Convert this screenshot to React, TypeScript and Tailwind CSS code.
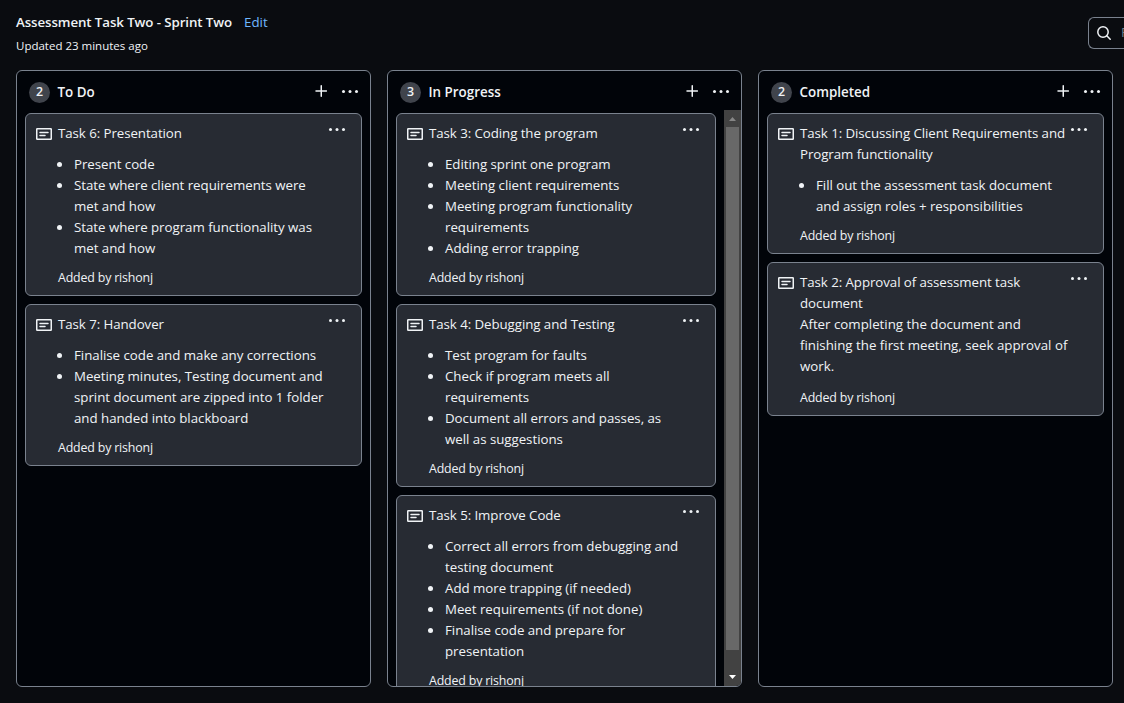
import React from "react";

type Task = { title: string[]; items?: string[]; text?: string[] };
type ColumnData = { name: string; tasks: Task[]; scroll?: boolean };

const columns: ColumnData[] = [
  {
    name: "To Do",
    tasks: [
      {
        title: ["Task 6: Presentation"],
        items: ["Present code", "State where client requirements were\nmet and how", "State where program functionality was\nmet and how"],
      },
      {
        title: ["Task 7: Handover"],
        items: ["Finalise code and make any corrections", "Meeting minutes, Testing document and\nsprint document are zipped into 1 folder\nand handed into blackboard"],
      },
    ],
  },
  {
    name: "In Progress",
    scroll: true,
    tasks: [
      {
        title: ["Task 3: Coding the program"],
        items: ["Editing sprint one program", "Meeting client requirements", "Meeting program functionality\nrequirements", "Adding error trapping"],
      },
      {
        title: ["Task 4: Debugging and Testing"],
        items: ["Test program for faults", "Check if program meets all\nrequirements", "Document all errors and passes, as\nwell as suggestions"],
      },
      {
        title: ["Task 5: Improve Code"],
        items: ["Correct all errors from debugging and\ntesting document", "Add more trapping (if needed)", "Meet requirements (if not done)", "Finalise code and prepare for\npresentation"],
      },
    ],
  },
  {
    name: "Completed",
    tasks: [
      {
        title: ["Task 1: Discussing Client Requirements and", "Program functionality"],
        items: ["Fill out the assessment task document\nand assign roles + responsibilities"],
      },
      {
        title: ["Task 2: Approval of assessment task", "document"],
        text: ["After completing the document and", "finishing the first meeting, seek approval of", "work."],
      },
    ],
  },
];

function Dots() {
  return (
    <svg width="18" height="6" viewBox="0 0 18 6" fill="currentColor" className="shrink-0">
      <circle cx="2.5" cy="2.5" r="1.5" />
      <circle cx="9" cy="2.5" r="1.5" />
      <circle cx="15.5" cy="2.5" r="1.5" />
    </svg>
  );
}

function Plus() {
  return (
    <svg width="12" height="12" viewBox="0 0 12 12" fill="none" stroke="currentColor" strokeWidth="1.5" strokeLinecap="round">
      <path d="M6.25 .75v10.5M1 6h10.5" />
    </svg>
  );
}

function Note() {
  return (
    <svg width="16" height="16" viewBox="0 0 16 16" fill="none" stroke="currentColor" strokeWidth="1.5" className="mt-[3px] shrink-0">
      <rect x=".75" y="2.75" width="14.5" height="10.5" rx=".5" />
      <path d="M4 6.5h8M4 9.5h5" strokeLinecap="round" />
    </svg>
  );
}

function Card({ task }: { task: Task }) {
  return (
    <article className="relative flex shrink-0 gap-1.5 rounded-md border border-[#7a828e] bg-[#272b33] pt-[9px] pr-3 pb-[7px] pl-[10px]">
      <Note />
      <div className="text-[13.3px] leading-[21px] whitespace-pre">
        <h3 className="tracking-[-0.07px]">{task.title.join("\n")}</h3>
        {task.items && (
          <ul className="mt-2.5 pl-4">
            {task.items.map((item) => (
              <li
                key={item}
                className="relative tracking-[-0.03px] before:absolute before:top-[8px] before:-left-[17px] before:size-[5px] before:rounded-full before:bg-[#f0f3f6]"
              >
                {item}
              </li>
            ))}
          </ul>
        )}
        {task.text && <p className="pb-0.5">{task.text.join("\n")}</p>}
        <p className="mt-2 text-[12.4px] tracking-[-0.17px]">Added by rishonj</p>
      </div>
      <button aria-label="Card menu" className="absolute top-[13px] right-[15px]">
        <Dots />
      </button>
    </article>
  );
}

function Scrollbar() {
  return (
    <div className="flex w-[17px] shrink-0 flex-col items-center bg-[#424242]">
      <svg width="17" height="17" viewBox="0 0 17 17" fill="#868686">
        <path d="M5 11h7L8.5 7z" />
      </svg>
      <div className="w-[13px] flex-1 bg-[#686868]" />
      <div className="flex h-[36px] items-end">
        <svg width="17" height="17" viewBox="0 0 17 17" fill="#fff">
          <path d="M5 6h7L8.5 10z" />
        </svg>
      </div>
    </div>
  );
}

function Column({ column }: { column: ColumnData }) {
  return (
    <section className="flex h-[617px] w-[355px] shrink-0 flex-col overflow-hidden rounded-md border border-[#7a828e] bg-[#010409]">
      <header className="flex h-[39px] shrink-0 items-center pt-1 pr-[11px] pl-3">
        <span className="flex size-[21px] items-center justify-center rounded-full bg-[#40444c] text-[12.4px] font-semibold">
          {column.tasks.length}
        </span>
        <h2 className="ml-[7.5px] flex-1 text-[13.4px] font-semibold">{column.name}</h2>
        <button aria-label="Add card" className="mb-[3px]">
          <Plus />
        </button>
        <button aria-label="Column menu" className="mb-0.5 ml-3.5">
          <Dots />
        </button>
      </header>
      <div className="flex min-h-0 flex-1">
        <div className="flex min-w-0 flex-1 flex-col gap-2 overflow-hidden px-2 pt-[3px]">
          {column.tasks.map((task) => (
            <Card key={task.title[0]} task={task} />
          ))}
        </div>
        {column.scroll && <Scrollbar />}
      </div>
    </section>
  );
}

export default function App() {
  return (
    <main className="h-[703px] w-[1124px] overflow-hidden bg-[#0a0c10] font-['Open_Sans',sans-serif] text-[#f0f3f6]">
      <header className="flex h-[70px] justify-between pl-4">
        <div className="pt-3">
          <div className="flex gap-3 text-[13.3px] leading-[21px]">
            <h1 className="font-semibold tracking-[-0.09px]">Assessment Task Two - Sprint Two</h1>
            <a className="text-[#71b7ff]">Edit</a>
          </div>
          <p className="mt-[3px] text-[11.5px] leading-[20px]">Updated 23 minutes ago</p>
        </div>
        <div className="mt-[17px] flex h-8 w-9 shrink-0 items-center gap-2.5 overflow-hidden rounded-l-md border border-r-0 border-[#7a828e] pl-2 text-[13.3px]">
          <svg width="14" height="14" viewBox="0 0 14 14" fill="none" stroke="currentColor" strokeWidth="1.5" strokeLinecap="round" className="shrink-0">
            <circle cx="6" cy="6" r="5.2" />
            <path d="m9.8 9.8 3.4 3.4" />
          </svg>
          <span className="text-[#7a828e]">Filter</span>
        </div>
      </header>
      <div className="flex gap-4 pl-4">
        {columns.map((column) => (
          <Column key={column.name} column={column} />
        ))}
      </div>
    </main>
  );
}
